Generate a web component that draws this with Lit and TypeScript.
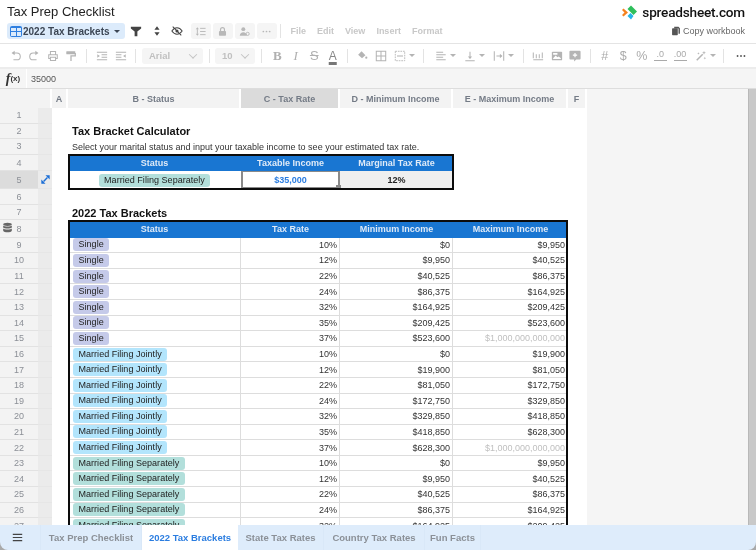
import { LitElement, html, css, svg, nothing } from "lit";
import { customElement } from "lit/decorators.js";

const T = 14;
const ic = (body: unknown, cls = "") =>
  html`<svg class="ic ${cls}" viewBox="0 0 ${T} ${T}" width="${T}" height="${T}">${body}</svg>`;

const line = "fill:none;stroke:currentColor;stroke-width:1.2";
const I: Record<string, unknown> = {
  filter: svg`<path fill="currentColor" d="M1 2h12v2L8.6 7.5V13H5.4V7.5L1 4z"/>`,
  sort: svg`<path fill="currentColor" d="M7 1.5l3 4H4zM7 12.5l-3-4h6z"/>`,
  hide: svg`<path style="${line}" d="M1 7c1.800-2.600 3.800-3.800 6-3.800S11.200 4.400 13 7c-1.800 2.600-3.800 3.800-6 3.800S2.800 9.600 1 7z"/><circle cx="7" cy="7" r="1.800" fill="currentColor"/><path style="${line}" d="M2 2l10 10"/>`,
  rowh: svg`<path fill="currentColor" d="M3 1.500l2 2.500H1zM3 12.500L1 10h4z"/><path style="${line}" d="M3 4v6M6.500 3h7M6.500 7h7M6.500 11h7"/>`,
  lock: svg`<path style="fill:none;stroke:currentColor;stroke-width:1.500" d="M4.500 6.500V4.500a2.500 2.500 0 015 0v2"/><rect x="2.500" y="6.500" width="9" height="6" rx="1" fill="currentColor"/>`,
  person: svg`<circle cx="5.500" cy="4" r="2.500" fill="currentColor"/><path fill="currentColor" d="M1 12.500c0-3 2-4.500 4.500-4.500S10 9.500 10 12.500z"/><circle cx="11" cy="10" r="2" style="${line}"/>`,
  dots: svg`<circle cx="3" cy="7" r="1.100" fill="currentColor"/><circle cx="7" cy="7" r="1.100" fill="currentColor"/><circle cx="11" cy="7" r="1.100" fill="currentColor"/>`,
  undo: svg`<path style="${line}" d="M3.500 3.500H8a3.800 3.800 0 010 8H4"/><path fill="currentColor" d="M5.500 0.800v5.400L1.800 3.500z"/>`,
  redo: svg`<path style="${line}" d="M10.500 3.500H6a3.800 3.800 0 000 8h4"/><path fill="currentColor" d="M8.500 0.800v5.400l3.700-2.700z"/>`,
  print: svg`<path style="${line}" d="M4 5V1.800h6V5M4 10H2V5.500h10V10h-2M4 8.500h6v3.700H4z"/>`,
  paint: svg`<rect x="1.500" y="1.500" width="10.500" height="3.500" rx=".6" fill="currentColor"/><path style="fill:none;stroke:currentColor;stroke-width:1.500" d="M12 3.500v3.300H7v6"/>`,
  indent: svg`<path style="${line}" d="M1 2.500h12M6.500 5.500H13M6.500 8.500H13M1 11.500h12"/><path fill="currentColor" d="M1.500 5l3 2-3 2z"/>`,
  outdent: svg`<path style="${line}" d="M1 2.500h12M1 5.500h6.500M1 8.500h6.500M1 11.500h12"/><path fill="currentColor" d="M12.500 5l-3 2 3 2z"/>`,
  fill: svg`<path fill="currentColor" d="M6.500 1.500l4.500 4.500-4 3.500L2.500 5.500z"/><circle cx="12" cy="9" r="1.300" fill="currentColor"/>`,
  borders: svg`<path style="${line}" d="M1.500 1.500h11v11h-11zM7 1.500v11M1.500 7h11"/>`,
  merge: svg`<path style="fill:none;stroke:currentColor;stroke-width:1;stroke-dasharray:2 1" d="M1.500 1.500h11v11h-11z"/><path style="${line}" d="M3.500 7h7"/>`,
  left: svg`<path style="${line}" d="M1.500 2.500h8M1.500 5.500h11M1.500 8.500h8M1.500 11.500h11"/>`,
  valign: svg`<path style="${line}" d="M1.500 12.500h11M7 2v7.500"/><path fill="currentColor" d="M4.500 7.500h5L7 10.500z"/>`,
  wrap: svg`<path style="${line}" d="M1.500 1.500v11M12.500 1.500v11M4 7h6"/><path fill="currentColor" d="M8 4.500L11 7l-3 2.500z"/>`,
  chart: svg`<path style="${line}" d="M1.500 9.500V3M1.500 11.500h11.500M5 9.500V5M8.500 9.500V5M12 9.500V3"/>`,
  image: svg`<rect x="1" y="2" width="12" height="10" rx="1" fill="currentColor"/><path fill="#fff" d="M2.500 9.500l3-3 2 2 1.500-1 2.500 2v1h-9zM2.500 3.500h5v2h-5z"/>`,
  comment: svg`<path fill="currentColor" d="M1.500 1h11a1 1 0 011 1v8a1 1 0 01-1 1H8.500L6 13.500V11H1.500a1 1 0 01-1-1V2a1 1 0 011-1z"/><path style="stroke:#fff;stroke-width:1.400" d="M7 3.500v5M4.500 6h5"/>`,
  wand: svg`<path style="fill:none;stroke:currentColor;stroke-width:1.800" d="M2 12L9 5"/><path fill="currentColor" d="M10.500 1l.6 1.700 1.700.6-1.700.6-.6 1.700-.6-1.700-1.700-.6 1.700-.6zM4 2.500l.4 1.100 1.100.4-1.100.4-.4 1.100-.4-1.100L2.500 4l1.100-.4zM11.500 8l.4 1.100 1.100.4-1.100.4-.4 1.100-.4-1.100-1.100-.4 1.100-.4z"/>`,
  copy: svg`<rect x="1.500" y="3" width="8" height="10" rx="1" fill="currentColor"/><path fill="currentColor" d="M4.500 1h6l2 2v8H10.500V3.500H4.500z"/>`,
  db: svg`<ellipse cx="7" cy="3" rx="5.500" ry="2" fill="currentColor"/><path fill="currentColor" d="M1.500 4.300C3 6 11 6 12.500 4.300v2.700C11 8.700 3 8.700 1.500 7zM1.500 8.300C3 10 11 10 12.500 8.300V11c-1 2.600-10 2.600-11 0z"/>`,
  expand: svg`<path style="stroke:currentColor;stroke-width:2.200" d="M4 10l6-6"/><path fill="currentColor" d="M7 0.500h6.500V7zM0.500 7v6.500H7z"/>`,
  burger: svg`<path style="stroke:currentColor;stroke-width:1.400" d="M1 3h12M1 7h12M1 11h12"/>`,
};

const SIN = "Single", JNT = "Married Filing Jointly", SEP = "Married Filing Separately";
const RATES = ["10%", "12%", "22%", "24%", "32%", "35%", "37%"];
const TOP = "1,000,000,000,000";
const BR: Record<string, string[]> = {
  [SIN]: ["0", "9,950", "40,525", "86,375", "164,925", "209,425", "523,600", TOP],
  [JNT]: ["0", "19,900", "81,050", "172,750", "329,850", "418,850", "628,300", TOP],
  [SEP]: ["0", "9,950", "40,525", "86,375", "164,925", "209,425", "314,150", TOP],
};
const PILL: Record<string, string> = { [SIN]: "sin", [JNT]: "jnt", [SEP]: "sep" };

const bracketRows = [SIN, JNT, SEP].flatMap((s) =>
  RATES.map((r, i) => ({ s, r, min: "$" + BR[s][i], max: "$" + BR[s][i + 1], gray: BR[s][i + 1] === TOP })),
).slice(0, 19);

@customElement("app-root")
export class AppRoot extends LitElement {
  static styles = css`
    :host {
      display: flex;
      flex-direction: column;
      width: 756px;
      height: 550px;
      overflow: hidden;
      background: #fff;
      font-family: "Liberation Sans", Arial, sans-serif;
      color: #222;
      filter: blur(0.4px);
    }
    .ic { display: block; flex: none; }

    .top { display: flex; justify-content: space-between; height: 44px; flex: none; box-sizing: border-box; border-bottom: 1px solid #e4e4e4; }
    .title { font-size: 13px; line-height: 16px; padding: 4px 0 0 7px; height: 23px; box-sizing: border-box; }
    .tb1 { display: flex; align-items: center; height: 16px; margin-left: 7px; color: #b8b8b8; }
    .sheet-pill { display: flex; align-items: center; width: 118px; height: 16px; background: #dcebfb; border-radius: 3px; box-sizing: border-box; padding-left: 3px; font-size: 10px; font-weight: 700; color: #3c4654; white-space: nowrap; flex: none; gap: 1px; }
    .grid-ic { width: 12px; height: 11px; background: #2f7fe0; border-radius: 2px; flex: none; display: grid; grid-template-columns: 1fr 1fr; gap: 1px; padding: 2px 1px 1px; box-sizing: border-box; }
    .grid-ic i { background: #dcebfb; }
    .caret { width: 0; height: 0; border: 3px solid transparent; border-top: 3.500px solid currentColor; border-bottom: 0; flex: none; margin-left: 3px; }
    .act { color: #444; width: 20.500px; display: flex; justify-content: center; }
    .act .ic { width: 12px; height: 12px; }
    .acts { display: flex; margin-left: 1px; }
    .box { width: 20px; height: 16px; background: #f5f5f5; border-radius: 3px; display: flex; align-items: center; justify-content: center; margin-right: 2px; }
    .box .ic { width: 11px; height: 11px; }
    .boxes { display: flex; margin-left: 3px; }
    .menu { display: flex; font-size: 9px; font-weight: 700; color: #c8c8c8; gap: 11px; margin-left: 10px; }
    .vr { width: 1px; height: 14px; background: #e3e3e3; flex: none; }
    .tb1 .vr { margin-left: 1px; }
    .right { display: flex; flex-direction: column; align-items: flex-end; padding-right: 11px; }
    .logo { display: flex; align-items: center; height: 24px; gap: 5px; font-family: Roboto, sans-serif; font-weight: 500; font-size: 13.600px; letter-spacing: -.2px; color: #111; }
    .copy { display: flex; align-items: center; gap: 2px; font-size: 9px; color: #666; height: 14px; }
    .copy .ic { width: 10px; height: 10px; color: #555; }

    .tb2 { display: flex; align-items: center; height: 25px; flex: none; box-sizing: border-box; padding-left: 6.500px; border-bottom: 2px solid #ececec; color: #b4b4b4; }
    .t { width: 18.500px; flex: none; display: flex; justify-content: center; align-items: center; font-size: 12px; }
    .t .ic { width: 12px; height: 12px; }
    .tc { width: 28px; }
    .tc29 { width: 29px; }
    .tc24 { width: 24px; margin-left: 3px; }
    .td { width: 21px; }
    .ind { margin-left: 1.500px; }
    .al { margin-left: 2px; }
    .tb2 .vr { margin: 0 5px; }
    .sel { height: 16px; background: #f5f5f5; border-radius: 3px; display: flex; align-items: center; justify-content: space-between; box-sizing: border-box; padding: 0 7px; font-size: 9.500px; font-weight: 700; color: #c0c0c0; flex: none; margin: 0 .5px; }
    .sel.f { width: 61px; margin-left: 1px; }
    .sel.s { width: 40px; }
    .chev { width: 5px; height: 5px; border: solid #c4c4c4; border-width: 0 1px 1px 0; transform: rotate(45deg) translate(-1px, -1px); }
    .bi { font-family: "Liberation Serif", serif; font-size: 13px; font-weight: 700; color: #b0b0b0; }
    .bold1 { margin-left: 1.500px; }
    .under { text-decoration: underline; text-decoration-thickness: 3px; text-underline-offset: 2px; color: #888; font-family: "Liberation Sans", sans-serif; font-size: 12px; font-weight: 400; text-decoration-color: #777; }
    .strike { text-decoration: line-through; font-weight: 400; font-family: "Liberation Sans", sans-serif; font-style: normal; }
    .it { font-style: italic; font-weight: 400; }
    .sym { font-size: 12.500px; color: #ababab; }
    .dec { font-size: 9px; line-height: 8px; color: #aaa; text-align: center; flex-direction: column; }
    .dec .ar { display: block; height: 2px; width: 13px; border-bottom: 1px solid #aaa; }
    .mini { color: #555; margin-left: 3px; }

    .fx { display: flex; height: 20px; flex: none; background: #f5f5f5; border-bottom: 1px solid #ddd; box-sizing: border-box; align-items: stretch; }
    .fx-l { width: 27px; box-sizing: border-box; border-right: 1px solid #fff; display: flex; align-items: center; justify-content: center; color: #333; font-weight: 700; }
    .fx-l b { font-family: "Liberation Serif", serif; font-style: italic; font-size: 14px; }
    .fx-l span { font-size: 8px; }
    .fx-v { font-size: 9px; color: #555; padding-left: 4px; display: flex; align-items: center; }

    .main { flex: 1; min-height: 0; display: flex; overflow: hidden; background: #f5f5f5; }
    .sheet { width: 587px; flex: none; background: #fff; position: relative; overflow: hidden; }
    .fillr { flex: 1; }
    .bar { width: 8px; flex: none; background: #c9c9c9; border-left: 1px solid #b8b8b8; box-sizing: border-box; }

    .row { display: grid; grid-template-columns: 38px 14px 16px 173px 99px 113px 115px 19px; height: 15.600px; font-size: 9px; }
    .r4 { height: 16.500px; }
    .r5 { height: 18px; }
    .r8 { height: 17.100px; }
    .hdr { height: 19px; background: #f3f3f3; }
    .hdr > div { display: flex; align-items: center; justify-content: center; font-weight: 700; color: #747b86; border-right: 2px solid #fff; box-sizing: border-box; }
    .hdr .corner { grid-column: span 2; background: #f3f3f3; }
    .hdr .on { background: #dbdbdb; }
    .num { display: flex; align-items: center; justify-content: center; color: #8b8f96; background: #f3f3f3; border-bottom: 1px solid #e2e2e2; box-sizing: border-box; }
    .gut { display: flex; align-items: center; justify-content: center; background: #ebebeb; border-bottom: 1px solid #e6e6e6; box-sizing: border-box; }
    .num.cur { background: #dcdcdc; }
    .gut .ic { width: 9px; height: 9px; color: #1c6fd6; }
    .num.db { position: relative; }
    .db-ic { position: absolute; left: 2px; top: 2px; color: #666; }
    .db-ic .ic { width: 11px; height: 11px; }
    .c { display: flex; align-items: center; box-sizing: border-box; min-width: 0; white-space: nowrap; color: #333; }
    .g { border-right: 1px solid #ddd; border-bottom: 1px solid #ddd; }
    .a { justify-content: flex-end; padding-right: 2px; }
    .m { justify-content: center; }
    .blue { background: #1976d2; color: #dfeaf7; font-weight: 700; justify-content: center; }
    .h1 { font-size: 11px; font-weight: 700; color: #111; grid-column: span 4; padding-left: 4px; overflow: visible; }
    .sub { font-size: 9px; color: #333; grid-column: span 4; padding-left: 4px; overflow: visible; }
    .sp { grid-column: span 5; }
    .pill { display: inline-block; height: 13px; line-height: 13px; padding: 0 5.500px; border-radius: 3px; color: #222; margin-left: 5px; letter-spacing: .03px; }
    .m .pill { margin: 0; }
    .sin { background: #c5cae9; }
    .jnt { background: #b3e5fc; }
    .sep { background: #b2dfdb; }
    .sel-c { color: #2b7de0; font-weight: 700; justify-content: center; border: 2px solid #8a8a8a; border-top-width: 1px; position: relative; }
    .handle { position: absolute; right: -3px; bottom: -3px; width: 5px; height: 5px; background: #8a8a8a; }
    .res { background: #efefef; font-weight: 700; color: #222; justify-content: center; }
    .gray { color: #c0c0c0; }
    .frame { position: absolute; left: 68px; border: 2px solid #0c0c0c; box-sizing: border-box; pointer-events: none; }
    .f1 { top: 65px; width: 386px; height: 36px; }
    .f2 { top: 131px; width: 500px; height: 400px; }

    .tabs-wrap { flex: none; background: #a9a9a9; }
    .tabs { height: 25px; display: flex; background: #deecfb; border-radius: 0 0 8px 8px; font-size: 9.500px; font-weight: 700; color: #8b9097; align-items: stretch; overflow: hidden; }
    .tab { display: flex; align-items: center; justify-content: center; border-right: 1px solid #d9e8f8; box-sizing: border-box; flex: none; }
    .burger { width: 41px; color: #444; justify-content: flex-start; padding-left: 12px; }
    .burger .ic { width: 11px; height: 11px; }
    .w1 { width: 101px; }
    .w2 { width: 96px; background: #fff; color: #2b7de0; border-right: 0; }
    .w3 { width: 86px; }
    .w4 { width: 101px; }
    .w5 { width: 56px; }
  `;

  private tool(n: string, cls = "") {
    return html`<span class="t ${cls}">${ic(I[n])}</span>`;
  }
  private toolC(n: string, cls = "tc") {
    return html`<span class="t ${cls}">${ic(I[n])}<i class="caret"></i></span>`;
  }

  private rowHead(n: number, cls = "", gut: unknown = nothing, extra: unknown = nothing) {
    return html`<div class="num ${cls}">${extra}${n}</div><div class="gut">${gut}</div>`;
  }

  render() {
    return html`
      <div class="top">
        <div>
          <div class="title">Tax Prep Checklist</div>
          <div class="tb1">
            <div class="sheet-pill"><span class="grid-ic"><i></i><i></i><i></i><i></i></span>2022 Tax Brackets<i class="caret"></i></div>
            <div class="acts">
              <span class="act">${ic(I.filter)}</span>
              <span class="act">${ic(I.sort)}</span>
              <span class="act">${ic(I.hide)}</span>
            </div>
            <div class="boxes">
              <span class="box">${ic(I.rowh)}</span>
              <span class="box">${ic(I.lock)}</span>
              <span class="box">${ic(I.person)}</span>
              <span class="box">${ic(I.dots)}</span>
            </div>
            <span class="vr"></span>
            <div class="menu"><span>File</span><span>Edit</span><span>View</span><span>Insert</span><span>Format</span></div>
          </div>
        </div>
        <div class="right">
          <div class="logo">
            <svg width="15" height="15" viewBox="0 0 15 15" class="ic">
              <path fill="#f5821f" d="M0 5l2.500 2.500L0 10l1.500 1.500L6 7.500 1.500 3.500z" />
              <path fill="#2ebf5b" d="M9 .5l6 6-3.500 3.500-6-6z" />
              <path fill="#24b5e8" d="M8.500 8l3 3L9 14.500l-3.500-3.500z" />
            </svg>
            <span>spreadsheet.com</span>
          </div>
          <div class="copy">${ic(I.copy)}<span>Copy workbook</span></div>
        </div>
      </div>

      <div class="tb2">
        ${this.tool("undo")}${this.tool("redo")}${this.tool("print")}${this.tool("paint")}
        <span class="vr"></span>
        ${this.tool("indent", "ind")}${this.tool("outdent")}
        <span class="vr"></span>
        <div class="sel f">Arial<i class="chev"></i></div>
        <span class="vr"></span>
        <div class="sel s">10<i class="chev"></i></div>
        <span class="vr"></span>
        <span class="t bi bold1">B</span><span class="t bi it">I</span><span class="t bi strike">S</span><span class="t bi"><span class="under">A</span></span>
        <span class="vr"></span>
        ${this.tool("fill")}${this.tool("borders")}${this.toolC("merge")}
        <span class="vr"></span>
        ${this.toolC("left", "tc29 al")}${this.toolC("valign", "tc29")}${this.toolC("wrap", "tc29")}
        <span class="vr"></span>
        ${this.tool("chart")}${this.tool("image")}${this.tool("comment")}
        <span class="vr"></span>
        <span class="t sym">#</span><span class="t sym">$</span><span class="t sym">%</span>
        <span class="t dec">.0<span class="ar"></span></span><span class="t dec td">.00<span class="ar"></span></span>
        ${this.toolC("wand", "tc24")}
        <span class="vr"></span>
        <span class="t mini">${ic(I.dots)}</span>
      </div>

      <div class="fx">
        <div class="fx-l"><b>f</b><span>(x)</span></div>
        <div class="fx-v">35000</div>
      </div>

      <div class="main">
        <div class="sheet">
          <div class="row hdr">
            <div class="corner"></div>
            <div>A</div><div>B - Status</div><div class="on">C - Tax Rate</div>
            <div>D - Minimum Income</div><div>E - Maximum Income</div><div>F</div>
          </div>
          <div class="row">${this.rowHead(1)}<div class="sp"></div></div>
          <div class="row">${this.rowHead(2)}<div></div><div class="c h1">Tax Bracket Calculator</div></div>
          <div class="row">${this.rowHead(3)}<div></div><div class="c sub">Select your marital status and input your taxable income to see your estimated tax rate.</div></div>
          <div class="row r4">${this.rowHead(4)}<div></div>
            <div class="c blue">Status</div><div class="c blue">Taxable Income</div><div class="c blue">Marginal Tax Rate</div><div></div><div></div>
          </div>
          <div class="row r5">${this.rowHead(5, "cur", ic(I.expand))}<div></div>
            <div class="c m"><span class="pill sep">${SEP}</span></div>
            <div class="c sel-c">$35,000<i class="handle"></i></div>
            <div class="c res">12%</div><div></div><div></div>
          </div>
          <div class="row">${this.rowHead(6)}<div class="sp"></div></div>
          <div class="row">${this.rowHead(7)}<div></div><div class="c h1">2022 Tax Brackets</div></div>
          <div class="row r8">${this.rowHead(8, "db", nothing, html`<span class="db-ic">${ic(I.db)}</span>`)}<div></div>
            <div class="c blue">Status</div><div class="c blue">Tax Rate</div><div class="c blue">Minimum Income</div><div class="c blue">Maximum Income</div><div></div>
          </div>
          ${bracketRows.map(
            (b, i) => html`<div class="row">${this.rowHead(9 + i)}<div></div>
              <div class="c g"><span class="pill ${PILL[b.s]}">${b.s}</span></div>
              <div class="c g a">${b.r}</div>
              <div class="c g a">${b.min}</div>
              <div class="c g a ${b.gray ? "gray" : ""}">${b.max}</div><div></div>
            </div>`,
          )}
          <div class="frame f1"></div>
          <div class="frame f2"></div>
        </div>
        <div class="fillr"></div>
        <div class="bar"></div>
      </div>

      <div class="tabs-wrap">
        <div class="tabs">
          <div class="tab burger">${ic(I.burger)}</div>
          <div class="tab w1">Tax Prep Checklist</div>
          <div class="tab w2">2022 Tax Brackets</div>
          <div class="tab w3">State Tax Rates</div>
          <div class="tab w4">Country Tax Rates</div>
          <div class="tab w5">Fun Facts</div>
        </div>
      </div>
    `;
  }
}
